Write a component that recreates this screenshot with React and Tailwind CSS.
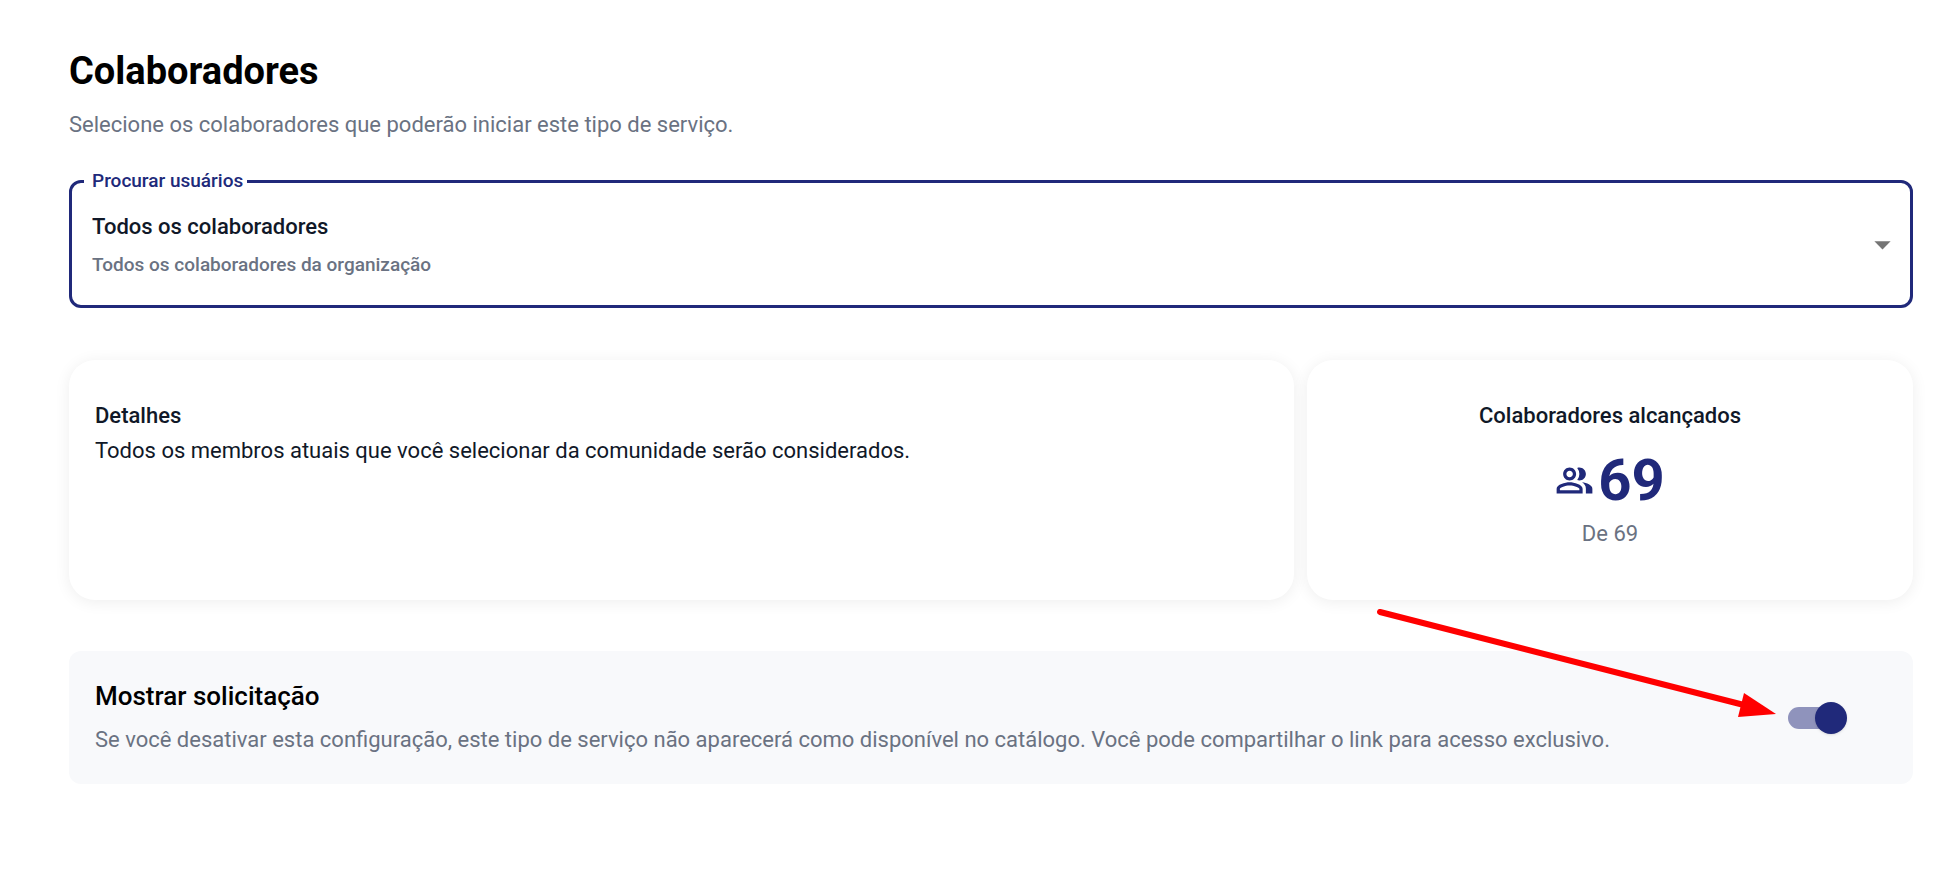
import React, { useState } from "react";
import { MdArrowDropDown, MdOutlinePeopleAlt } from "react-icons/md";

const audiences = [
  {
    value: "all",
    label: "Todos os colaboradores",
    description: "Todos os colaboradores da organização",
  },
];

const AudienceSelect = ({ value, onChange }) => {
  const selected = audiences.find((item) => item.value === value);

  return (
    <fieldset className="mt-7 rounded-xl border-3 border-[#20297a] pb-2.5 pl-3 pr-2">
      <legend className="pr-1 pl-2 text-[19px] leading-6 font-medium text-[#20297a]">
        <label htmlFor="audience">Procurar usuários</label>
      </legend>
      <div className="flex items-center">
        <div className="flex-1 px-2 pt-[18px] pb-3.5">
          <select
            id="audience"
            value={value}
            onChange={(e) => onChange(e.target.value)}
            className="block w-full appearance-none bg-transparent text-[22px] leading-8 font-medium text-gray-900 outline-none"
          >
            {audiences.map((item) => (
              <option key={item.value} value={item.value}>
                {item.label}
              </option>
            ))}
          </select>
          <p className="mt-1.5 text-[19px] leading-8 font-medium text-gray-500">
            {selected.description}
          </p>
        </div>
        <MdArrowDropDown className="size-[39px] text-[#757575]" />
      </div>
    </fieldset>
  );
};

const Switch = ({ id, checked, onChange }) => (
  <span className="relative flex h-8 w-[59px] shrink-0 items-center">
    <input
      id={id}
      type="checkbox"
      role="switch"
      checked={checked}
      onChange={(e) => onChange(e.target.checked)}
      className="peer h-[22px] w-[54px] cursor-pointer appearance-none rounded-full bg-gray-400 checked:bg-[#8f93bc]"
    />
    <span className="pointer-events-none absolute top-0 left-0 size-8 rounded-full bg-white shadow-sm peer-checked:left-[27px] peer-checked:bg-[#20297a]" />
  </span>
);

const Arrow = () => (
  <svg
    viewBox="0 0 400 110"
    className="pointer-events-none absolute -top-[42px] right-[137px] h-[110px] w-[400px]"
    aria-hidden="true"
  >
    <line
      x1="4"
      y1="3"
      x2="368"
      y2="96"
      stroke="#ff0000"
      strokeWidth="6"
      strokeLinecap="round"
    />
    <path d="M368 84 L400 105 L362 108 Z" fill="#ff0000" />
  </svg>
);

const App = () => {
  const [audience, setAudience] = useState("all");
  const [visible, setVisible] = useState(true);

  return (
    <main className="bg-white pt-[45px] pr-[45px] pb-16 pl-[69px] font-['Roboto',sans-serif]">
      <h1 className="text-[38px] leading-[52px] font-bold text-black">
        Colaboradores
      </h1>
      <p className="mt-3 text-[22px] leading-8 text-gray-500">
        Selecione os colaboradores que poderão iniciar este tipo de serviço.
      </p>

      <AudienceSelect value={audience} onChange={setAudience} />

      <div className="mt-[52px] grid grid-cols-3 gap-[13px]">
        <section className="col-span-2 min-h-60 rounded-[26px] bg-white px-[26px] pt-[38px] shadow-[0_2px_16px_rgba(0,0,0,0.07)]">
          <h2 className="text-[22px] leading-[35px] font-medium text-gray-900">
            Detalhes
          </h2>
          <p className="text-[22px] leading-[35px] text-gray-900">
            Todos os membros atuais que você selecionar da comunidade serão
            considerados.
          </p>
        </section>
        <section className="flex min-h-60 flex-col items-center rounded-[26px] bg-white px-[26px] pt-[38px] shadow-[0_2px_16px_rgba(0,0,0,0.07)]">
          <h2 className="text-[22px] leading-[35px] font-medium text-gray-900">
            Colaboradores alcançados
          </h2>
          <div className="mt-[9px] flex items-center gap-1 text-[#20297a]">
            <MdOutlinePeopleAlt className="size-[39px]" />
            <span className="text-[58px] leading-[76px] font-bold">69</span>
          </div>
          <p className="text-[22px] leading-8 text-gray-500">De 69</p>
        </section>
      </div>

      <div className="relative mt-[51px] flex items-center justify-between rounded-xl bg-[#f8f9fb] py-[23px] pr-[66px] pl-[26px]">
        <div>
          <label
            htmlFor="visible"
            className="block text-[26px] leading-[44px] font-medium text-black"
          >
            Mostrar solicitação
          </label>
          <p className="text-[22px] leading-[43px] text-gray-500">
            Se você desativar esta configuração, este tipo de serviço não
            aparecerá como disponível no catálogo. Você pode compartilhar o link
            para acesso exclusivo.
          </p>
        </div>
        <Switch id="visible" checked={visible} onChange={setVisible} />
        <Arrow />
      </div>
    </main>
  );
};

export default App;
